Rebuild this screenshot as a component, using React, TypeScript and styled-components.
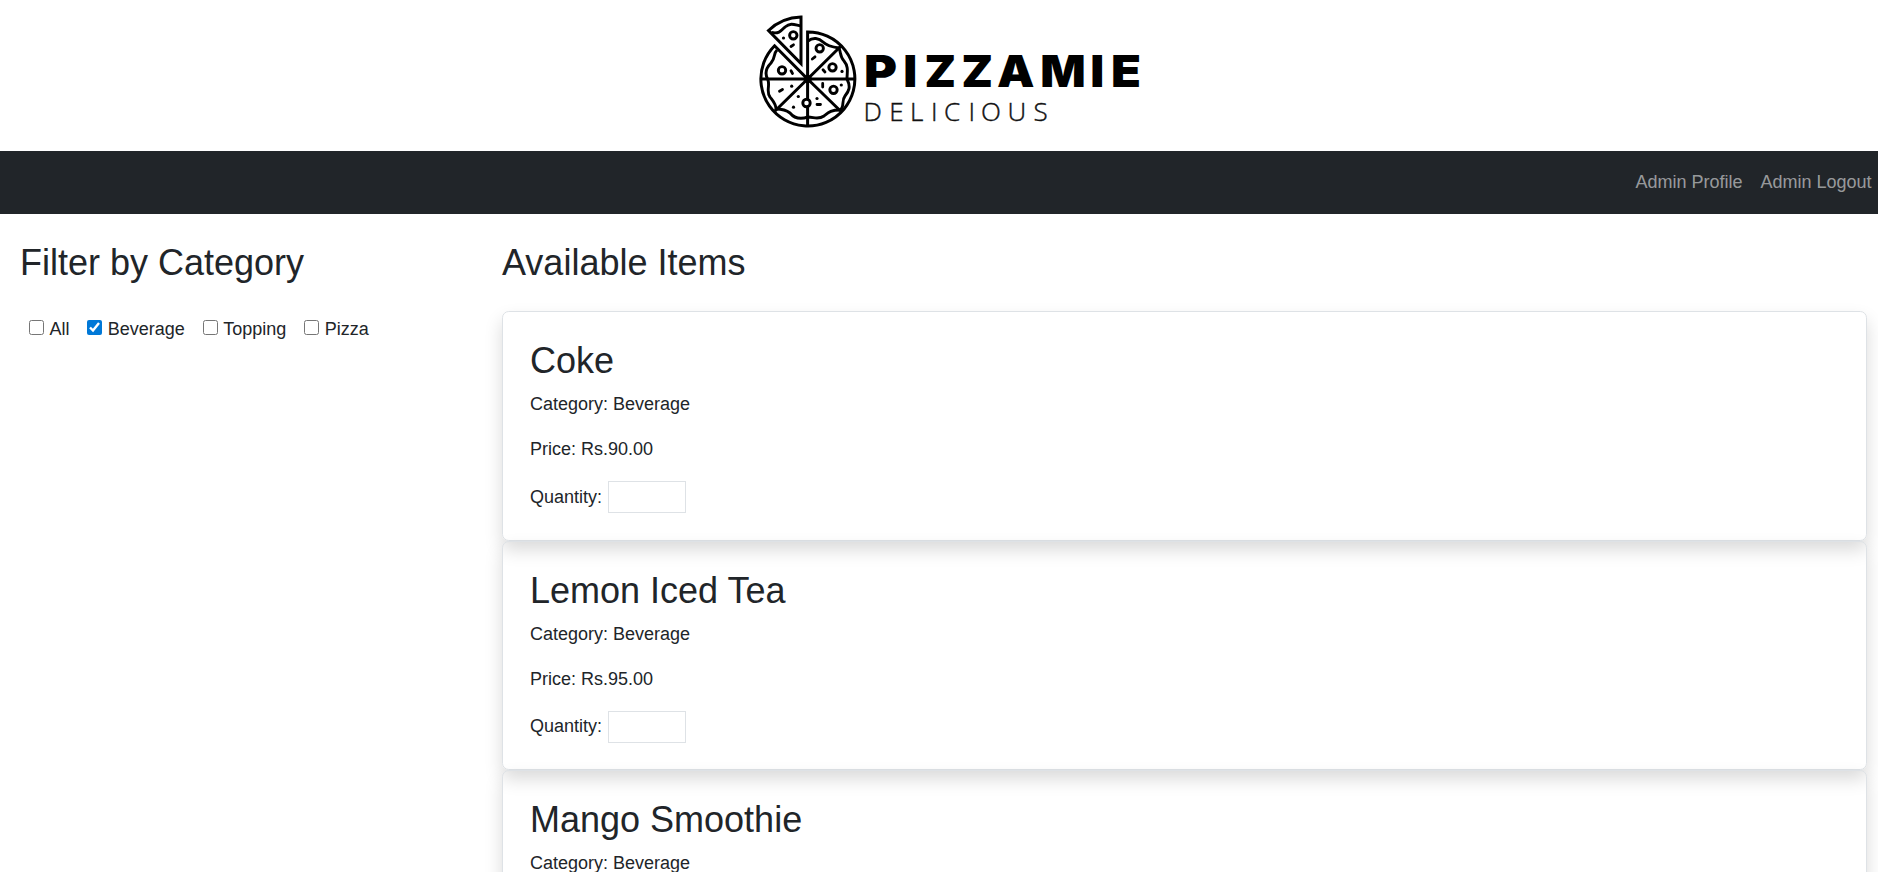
import React, { useState } from "react";
import styled, { createGlobalStyle } from "styled-components";

const GlobalStyle = createGlobalStyle`
  *, *::before, *::after { box-sizing: border-box; }
  html { font-size: 18px; }
  body {
    margin: 0;
    height: 100vh;
    overflow: hidden;
    background: #fff;
    color: #212529;
    font-family: "Liberation Sans", Arial, sans-serif;
    font-size: 1rem;
    line-height: 1.5;
  }
`;

const Page = styled.div`
  display: flex;
  flex-direction: column;
`;

const Header = styled.header`
  display: flex;
  justify-content: center;
  height: 151px;
`;

const LogoArt = styled.svg`
  display: block;
  width: 420px;
  height: 150px;
  margin-left: 22px;
`;

const NavBar = styled.nav`
  display: flex;
  justify-content: flex-end;
  align-items: center;
  gap: 18px;
  height: 63px;
  padding: 0 6.5px 1px 0;
  background: #212529;
`;

const NavLink = styled.a`
  color: rgba(255, 255, 255, 0.55);
  text-decoration: none;
`;

const Content = styled.main`
  display: grid;
  grid-template-columns: 482px 1365px;
  padding: 27px 0 0 20px;
`;

const Title = styled.h2<{ $gap: string }>`
  margin: 0 0 ${(p) => p.$gap};
  font-size: 2rem;
  font-weight: 400;
  line-height: 1.2;
`;

const Filters = styled.div`
  display: flex;
  padding-left: 9px;
  gap: 18px;
`;

const FilterLabel = styled.label`
  display: flex;
  align-items: flex-start;
  gap: 5.4px;
`;

const Check = styled.input`
  width: 15px;
  height: 15px;
  margin: 4px 0 0;
  accent-color: #0078d7;
`;

const Card = styled.article`
  height: 229.4px;
  padding: 27px;
  border: 1px solid #dee2e6;
  border-radius: 6.75px;
  box-shadow: 0 9px 18px rgba(0, 0, 0, 0.15);
`;

const Line = styled.p`
  margin: 0 0 1rem;
`;

const QuantityRow = styled.label`
  display: flex;
  align-items: center;
  gap: 6px;
`;

const Quantity = styled.input`
  width: 78px;
  height: 32px;
  border: 1px solid #dee2e6;
  background: #fff;
  font: inherit;
  outline: none;
`;

/* letter, left edge, advance */
const wordmark: [string, number, number][] = [
  ["P", 124, 33],
  ["I", 163.2, 14],
  ["Z", 184.5, 31.5],
  ["Z", 221.5, 31.5],
  ["A", 257, 37.5],
  ["M", 300.3, 45.5],
  ["I", 350.3, 14],
  ["E", 371, 30],
];

const tagline: [string, number][] = [
  ["D", 123.5], ["E", 149.3], ["L", 170], ["I", 191], ["C", 204],
  ["I", 228.5], ["O", 241], ["U", 267.5], ["S", 293.5],
];

function Logo() {
  return (
    <LogoArt viewBox="0 0 420 150" role="img" aria-label="Pizzamie Delicious">
      <g fill="none" stroke="#000" strokeWidth="3" strokeLinejoin="miter">
        <path d="M67.6 79V32A47 47 0 1 1 34.6 45.8Z" />
        <path d="M61 17V63.5L28.5 30.5Q42 17.5 61 17Z" />
        <path d="M67.6 79V125.5M20.5 79H114.5M67.6 79L100.5 46.5M67.6 79L35 111M67.6 79L100.5 111" />
        <path
          strokeWidth="2.9"
          d="M31.5 32.5C39 34 41 31 45 27C51 22 55 25 61 26
             M68 41C73 37 79 38 83 42C87 46 92 47 99 48C101 53 100 57 104 61C109 67 107 72 107 79C111 87 109 91 105 96C101 101 105 107 100 110C91 110 89 112 84 116C78 120 74 117 68 117C59 120 54 118 50 113C45 109 40 109 36 109C36 104 33 101 30 97C26 92 30 86 28 80C24 73 27 67 31 63C36 57 33 54 37 50"
        />
        <g strokeWidth="2.9">
          <circle cx="53.3" cy="35.3" r="3.7" />
          <circle cx="79.7" cy="48.3" r="3.7" />
          <circle cx="92.5" cy="67.3" r="3.7" />
          <circle cx="42" cy="70.3" r="3.7" />
          <circle cx="93.5" cy="89.8" r="3.7" />
          <circle cx="66.5" cy="103" r="3.7" fill="#fff" />
        </g>
        <path
          strokeWidth="2.8"
          strokeLinecap="round"
          d="M51 46.5L53.5 44.8M72.3 59L75 56.8M83 69.8L85 72M51 70.8L52.5 73.5M39.5 91.3L42.5 89.5M82.7 83.5V87M77 104.5H80.5"
        />
      </g>
      <circle cx="43.5" cy="38" r="1.6" />
      <circle cx="102" cy="71.4" r="1.6" />
      <circle cx="101.3" cy="85" r="1.6" />
      <circle cx="51.7" cy="86.2" r="1.6" />
      <circle cx="58.3" cy="96.5" r="1.6" />
      <circle cx="53.5" cy="107.2" r="1.6" />
      <circle cx="77" cy="98.5" r="1.6" />
      <circle cx="67.6" cy="79" r="4" />
      <g fontFamily="Inter, sans-serif" fontWeight="900" fontSize="44.5">
        {wordmark.map(([c, x, w], i) => (
          <text key={i} x={x} y="87" textLength={w} lengthAdjust="spacingAndGlyphs">{c}</text>
        ))}
      </g>
      <g
        fontFamily="'Open Sans', sans-serif"
        fontWeight="300"
        fontSize="26"
        fill="#111"
        stroke="#111"
        strokeWidth="0.4"
      >
        {tagline.map(([c, x], i) => (
          <text key={i} x={x} y="120.5">{c}</text>
        ))}
      </g>
    </LogoArt>
  );
}

const items = [
  { name: "Coke", category: "Beverage", price: "90.00" },
  { name: "Lemon Iced Tea", category: "Beverage", price: "95.00" },
  { name: "Mango Smoothie", category: "Beverage", price: "120.00" },
];

export default function App() {
  const [selected, setSelected] = useState<string[]>(["Beverage"]);
  const toggle = (name: string) =>
    setSelected((s) => (s.includes(name) ? s.filter((n) => n !== name) : [...s, name]));

  return (
    <Page>
      <GlobalStyle />
      <Header>
        <Logo />
      </Header>
      <NavBar>
        <NavLink>Admin Profile</NavLink>
        <NavLink>Admin Logout</NavLink>
      </NavBar>
      <Content>
        <section>
          <Title $gap="32px">Filter by Category</Title>
          <Filters>
            {["All", "Beverage", "Topping", "Pizza"].map((name) => (
              <FilterLabel key={name}>
                <Check type="checkbox" checked={selected.includes(name)} onChange={() => toggle(name)} />
                {name}
              </FilterLabel>
            ))}
          </Filters>
        </section>
        <section>
          <Title $gap="27px">Available Items</Title>
          {items.map((item) => (
            <Card key={item.name}>
              <Title $gap="9px">{item.name}</Title>
              <Line>Category: {item.category}</Line>
              <Line>Price: Rs.{item.price}</Line>
              <QuantityRow>
                Quantity:
                <Quantity />
              </QuantityRow>
            </Card>
          ))}
        </section>
      </Content>
    </Page>
  );
}
